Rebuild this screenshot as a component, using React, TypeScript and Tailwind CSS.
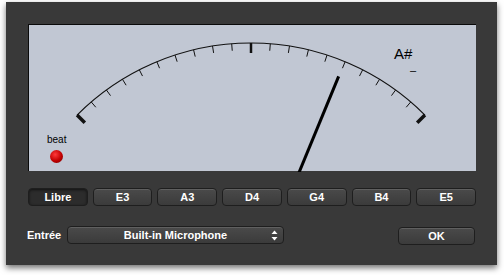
const NOTES = ['Libre', 'E3', 'A3', 'D4', 'G4', 'B4', 'E5'];

const CX = 222;
const CY = 264;
const R = 246;

const polar = (deg: number, r: number) => {
  const a = (deg * Math.PI) / 180;
  return { x: CX + r * Math.sin(a), y: CY - r * Math.cos(a) };
};

const Meter = () => {
  const start = polar(-45, R);
  const end = polar(45, R);
  const tip = polar(22.4, 230);
  return (
    <svg width="448" height="147" viewBox="0 0 448 147" className="absolute inset-0">
      <path d={`M ${start.x} ${start.y} A ${R} ${R} 0 0 1 ${end.x} ${end.y}`} fill="none" stroke="#111" strokeWidth="1.2" />
      {Array.from({ length: 21 }).map((_, i) => {
        const deg = -45 + i * 4.5;
        const edge = i === 0 || i === 20;
        const big = edge || i === 10;
        const o = polar(deg, R);
        const n = polar(deg, edge ? R - 11 : big ? R - 10 : R - 7);
        return <line key={i} x1={o.x} y1={o.y} x2={n.x} y2={n.y} stroke="#111" strokeWidth={edge ? 3.5 : big ? 2.5 : 1} />;
      })}
      <line x1={CX} y1={CY} x2={tip.x} y2={tip.y} stroke="#000" strokeWidth="3" />
    </svg>
  );
};

const Button = ({ label, active }: { label: string; active?: boolean }) => (
  <button
    className={`h-[18px] rounded-[4px] border border-[#1e1e1e] text-[11px] font-bold text-white leading-none ${
      active
        ? 'bg-[#2c2c2c] shadow-[inset_0_1px_3px_rgba(0,0,0,0.6)]'
        : 'bg-gradient-to-b from-[#4a4a4a] to-[#3b3b3b] shadow-[inset_0_1px_0_rgba(255,255,255,0.12)]'
    }`}
  >
    {label}
  </button>
);

export default function App() {
  return (
    <div className="w-[504px] h-[275px] bg-white pl-[6px] pt-[2px]" style={{ fontFamily: '"Liberation Sans", Arial, sans-serif' }}>
      <div className="w-[491px] h-[263px] bg-[#393939] shadow-[0_3px_6px_rgba(0,0,0,0.55)] pt-[22px] pl-[22px] pr-[21px]">
        <div className="relative h-[147px] bg-[#c1c7d3] border-t border-l border-[#0a0a0a] border-b-[#2a2a2a]">
          <Meter />
          <div className="absolute left-[365px] top-[21px] text-[15px] leading-none text-black">A#</div>
          <div className="absolute left-[381px] top-[40px] text-[11px] leading-none text-black">–</div>
          <div className="absolute left-[18px] top-[110px] flex flex-col items-center gap-[5px]">
            <span className="text-[10px] leading-none text-black">beat</span>
            <span className="w-[13px] h-[13px] rounded-full bg-[radial-gradient(circle_at_40%_35%,#ff3a3a,#c00000_55%,#6a0000)]" />
          </div>
        </div>

        <div className="grid grid-cols-7 gap-[5px] mt-[17px]">
          {NOTES.map((n, i) => (
            <Button key={n} label={n} active={i === 0} />
          ))}
        </div>

        <div className="flex items-center mt-[17px]">
          <span className="w-[40px] -ml-[1px] text-[11px] font-bold text-white">Entrée</span>
          <div className="relative w-[217px] h-[18px] rounded-[4px] border border-[#1e1e1e] bg-gradient-to-b from-[#4a4a4a] to-[#3b3b3b] shadow-[inset_0_1px_0_rgba(255,255,255,0.12)] flex items-center justify-center text-[11px] font-bold text-white">
            Built-in Microphone
            <svg width="7" height="11" viewBox="0 0 7 11" className="absolute right-[5px] top-[3px]">
              <path d="M0.5 4 L3.5 0.5 L6.5 4 Z" fill="#fff" />
              <path d="M0.5 7 L3.5 10.5 L6.5 7 Z" fill="#fff" />
            </svg>
          </div>
          <div className="ml-auto mr-[1px] w-[77px]">
            <button className="w-full h-[18px] rounded-[4px] border border-[#1e1e1e] bg-gradient-to-b from-[#4a4a4a] to-[#3b3b3b] shadow-[inset_0_1px_0_rgba(255,255,255,0.12)] text-[11px] font-bold text-white">
              OK
            </button>
          </div>
        </div>
      </div>
    </div>
  );
}
